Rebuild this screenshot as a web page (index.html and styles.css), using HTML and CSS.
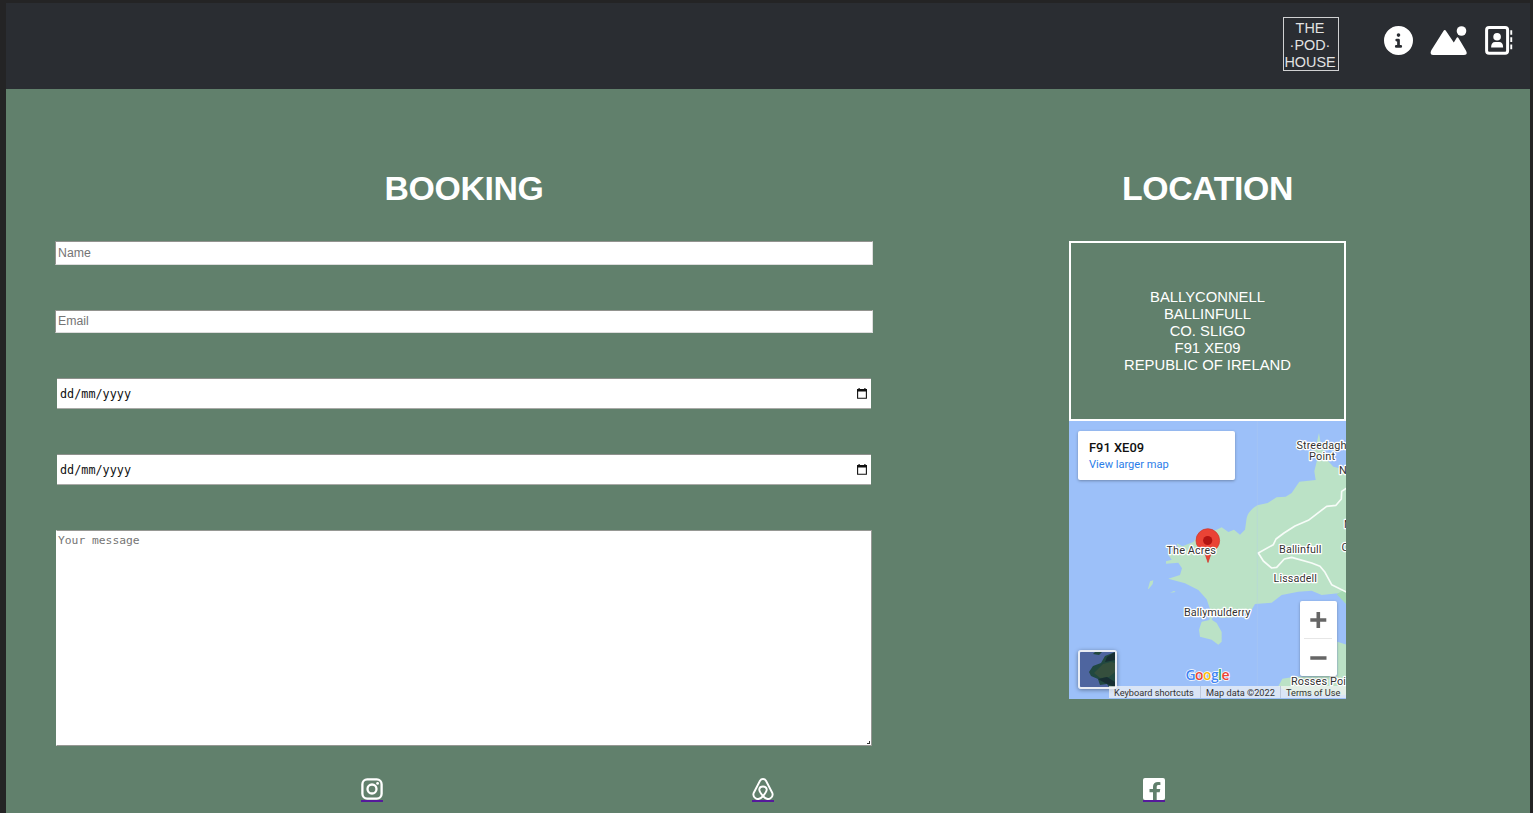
FILE: index.html
```html
<!DOCTYPE html>
<html lang="en">
<head>
<meta charset="utf-8">
<title>The Pod House - Booking</title>
<link rel="stylesheet" href="styles.css">
</head>
<body>
<div class="page">
  <header class="header">
    <a class="logo"><span>THE</span><span>·POD·</span><span>HOUSE</span></a>
    <nav class="nav">
      <svg class="nav-info" viewBox="0 0 512 512"><path fill="#fff" d="M256 0a256 256 0 1 0 0 512a256 256 0 1 0 0-512zm0 128a32 32 0 1 1 0 64a32 32 0 1 1 0-64zm40 256h-80a24 24 0 0 1 0-48h16v-64h-8a24 24 0 0 1 0-48h32a24 24 0 0 1 24 24v88h16a24 24 0 0 1 0 48z"/></svg>
      <svg class="nav-hills" viewBox="0 0 36 30"><circle cx="31" cy="5" r="4.8" fill="#fff"/><path fill="#fff" d="M12.8 5.2q1.4-2.3 2.9 0l7.6 11.2 2.6-4.2q1.1-1.7 2.2 0l7.3 12.400q2.400 4.300-1.800 4.400H2.500Q-1.200 28.700.8 24.300z"/></svg>
      <svg class="nav-contact" viewBox="0 0 28 29"><rect x="1.6" y="1.600" width="21" height="25.600" rx="2.500" fill="none" stroke="#fff" stroke-width="3"/><circle cx="12.100" cy="10.800" r="3.800" fill="#fff"/><path fill="#fff" d="M6.100 21.500q0-5.500 4-5.500h4q4 0 4 5.500z"/><path fill="#fff" d="M25.300 4.200h1.900v4.600h-1.900zM25.300 11.300h1.900v4.800h-1.900zM25.300 18.500h1.900v4.700h-1.900z"/></svg>
    </nav>
  </header>
  <main class="content">
    <section class="booking">
      <h1>BOOKING</h1>
      <form class="form">
        <input class="field name" type="text" placeholder="Name">
        <input class="field email" type="text" placeholder="Email">
        <label class="date"><span>dd/mm/yyyy</span><svg class="calendar" viewBox="0 0 10 11"><path d="M.6 2h8.800v8.300H.6z" fill="none" stroke="#111" stroke-width="1.100"/><path d="M0 1h10v2.600H0zM1.500 0h1.200v2H1.500zM7.300 0h1.200v2H7.300z" fill="#111"/></svg></label>
        <label class="date"><span>dd/mm/yyyy</span><svg class="calendar" viewBox="0 0 10 11"><path d="M.6 2h8.800v8.300H.6z" fill="none" stroke="#111" stroke-width="1.100"/><path d="M0 1h10v2.600H0zM1.500 0h1.200v2H1.500zM7.300 0h1.200v2H7.300z" fill="#111"/></svg></label>
        <div class="message-wrap">
          <textarea class="message" placeholder="Your message"></textarea>
          <svg class="grip" viewBox="0 0 3 3"><path d="M2 0h1v3H0V2h2z" fill="#333"/></svg>
        </div>
      </form>
    </section>
    <section class="location">
      <h1>LOCATION</h1>
      <address class="address">BALLYCONNELL<br>BALLINFULL<br>CO. SLIGO<br>F91 XE09<br>REPUBLIC OF IRELAND</address>
      <div class="map">
        <svg class="terrain" viewBox="0 0 277 278">
          <g transform="translate(-4 -3) scale(.33333)">
            <path fill="#bbe2c6" d="M762 45L766 70 790 130 805 146 850 157V540L820 526 770 531 740 518 700 521 650 531 620 554 570 558 560 575 520 596 470 600 446 592 440 605 455 615 470 642V671L460 680 440 665 405 656 402 635 410 611 433 606 436 576 425 544 400 516 360 496 310 482 345 471 351 451 340 434 303 437 303 430 320 425 310 410 340 390 335 376 352 385 385 372 400 350 455 335 470 328 490 342 507 335 525 350 540 335 545 300Q549 279 577 262L608 255 635 238 662 236 680 225 703 191 752 186 748 160 760 110 740 90 755 75z"/>
            <path fill="#bbe2c6" d="M249 512L255 490 265 487 263 498 251 513zM315 524L327 519 332 522zM817 671L850 682V830H680L640 805 652 782 690 776 817 774z"/>
            <path fill="#a5d9b3" d="M815 529L832 518 850 525V565z"/>
            <path fill="none" stroke="#f7fcf8" stroke-width="5" stroke-linejoin="round" d="M845 210L830 220 829 243 813 262 785 265 730 307 690 324 657 345 633 363 625 380 580 405 595 429 620 450 635 448 658 423 680 418 740 435 765 445 780 463 800 500 846 523"/>
            <path stroke="#b5cdec" stroke-opacity=".5" stroke-width="2" d="M577 9V843"/>
          </g>
          <path d="M139 141.500L135.500 131Q127 127 127 119.500a11.800 11.800 0 0 1 23.600 0q0 7.500-8.100 11.500z" fill="#ea4335" stroke="#cf3529" stroke-width=".7"/>
          <circle cx="138.700" cy="119.500" r="4.600" fill="#b31412"/>
          <g class="labels">
            <text x="227.500" y="28" textLength="50">Streedagh</text>
            <text x="240" y="39" textLength="26">Point</text>
            <text x="270" y="53">N</text>
            <text x="275" y="107">M</text>
            <text x="272.500" y="130">C</text>
            <text x="97.500" y="132.500" textLength="49.500">The Acres</text>
            <text x="210" y="132" textLength="42.500">Ballinfull</text>
            <text x="204.500" y="161" textLength="43.500">Lissadell</text>
            <text x="115" y="194.500" textLength="66.500">Ballymulderry</text>
            <text x="222" y="264" textLength="61">Rosses Poin</text>
          </g>
          <text class="google" x="116.500" y="258.500" textLength="44"><tspan fill="#4285f4">G</tspan><tspan fill="#ea4335">o</tspan><tspan fill="#fbbc04">o</tspan><tspan fill="#4285f4">g</tspan><tspan fill="#34a853">l</tspan><tspan fill="#ea4335">e</tspan></text>
        </svg>
        <div class="place"><strong>F91 XE09</strong><a>View larger map</a></div>
        <div class="zoom-control">
          <svg viewBox="0 0 37 75"><path d="M10.300 17.200h6.200V11h3.600v6.200h6.200v3.600h-6.200V27h-3.600v-6.200h-6.200zM10.300 55.200h16.200v3.600H10.300z" fill="#666"/><path d="M4 37.500h28" stroke="#e6e6e6"/></svg>
        </div>
        <div class="satellite">
          <svg viewBox="0 0 35 35"><path fill="#4e659f" d="M0 0h35v35H0z"/><path fill="#21483f" d="M35 0L25 4 21 11 13 14 9 20 11 24 18 27 20 33 27 32 29 35H35zM15 0L13 2 19 3 22 0z"/><path fill="#354f3d" d="M31 10L23 12 18 17 14 21 20 26 29 25 35 20V11z"/><path fill="#172e32" d="M35 0L27 5 25 10 35 8zM18 27L27 25 35 30V35L25 31z"/></svg>
        </div>
        <div class="credits"><span class="shortcuts">Keyboard shortcuts</span><span class="data">Map data ©2022</span><span class="terms">Terms of Use</span></div>
      </div>
    </section>
  </main>
  <footer class="social">
    <a><svg viewBox="0 0 22 22"><rect x="1.400" y="1.400" width="19.200" height="19.200" rx="4.800" fill="none" stroke="#fff" stroke-width="2.300"/><circle cx="11" cy="11" r="4.500" fill="none" stroke="#fff" stroke-width="2.300"/><circle cx="16.600" cy="5.400" r="1.400" fill="#fff"/></svg></a>
    <a><svg viewBox="0 0 22 22"><path fill="none" stroke="#fff" stroke-width="1.900" d="M11 18.200C8.500 15.200 7 13 7.300 11.200 7.600 9.200 9.200 8.500 11 8.500s3.400.7 3.700 2.700C15 13 13.500 15.200 11 18.200zM11 18.200C8.600 21 5.800 21.700 3.500 20.200 1.300 18.800 1 16.700 1.800 14.700L8 2.800C8.800 1.400 9.700 1 11 1s2.200.4 3 1.800l6.200 11.900c.8 2 .5 4.100-1.700 5.500-2.300 1.500-5.100.8-7.500-2z"/></svg></a>
    <a><svg viewBox="0 0 22 22"><path fill="#fff" fill-rule="evenodd" d="M2 0h18q2 0 2 2v18q0 2-2 2h-6.300v-7.800h3l.6-3.200h-3.600V9c0-1.600.7-2 2-2h1.700V4.200C16.600 4 15.700 4 15 4c-3.200 0-5 1.600-5 4.800V11H6.500v3.200H10V22H2q-2 0-2-2V2Q0 0 2 0z"/></svg></a>
  </footer>
</div>
</body>
</html>
```
FILE: styles.css
```css
* { box-sizing: border-box; }
body { margin: 0; background: #242425; overflow: hidden; font-family: "Liberation Sans", Arial, sans-serif; }
.page { height: 813px; padding: 3px 3px 0 6px; display: flex; flex-direction: column; }
.header { height: 86px; flex: none; background: #2a2d32; display: flex; justify-content: flex-end; align-items: flex-start; padding: 14px 17px 0 0; }
.logo { width: 56px; height: 54px; border: 1px solid #d0d1d2; margin-right: 45px; display: flex; flex-direction: column; align-items: center; color: #e2e3e3; font-size: 14.400px; line-height: 17px; padding: 2px 2px 0 0; }
.nav { display: flex; align-items: flex-start; padding-top: 9px; }
.nav svg { display: block; }
.nav-info { width: 29px; height: 29px; margin-right: 17px; }
.nav-hills { width: 37px; height: 30px; margin-right: 18px; }
.nav-contact { width: 28px; height: 29px; }
.content { height: 672px; flex: none; background: #61806c; display: flex; padding-left: 49px; }
h1 { margin: 0; padding-top: 78px; height: 152px; font-size: 33.800px; letter-spacing: -.35px; line-height: 42px; color: #fff; text-align: center; font-weight: bold; }
.booking { width: 818px; }
.form { display: flex; flex-direction: column; }
.field { display: block; width: 818px; border: 1px solid #92938f; border-right-color: #ddd; border-bottom-color: #ddd; border-radius: 0; padding: 0 2px; background: #fff; font: 12.300px "Liberation Sans", sans-serif; outline: 0; }
.field::placeholder, .message::placeholder { color: #757575; opacity: 1; }
.name { height: 24px; margin-bottom: 45px; }
.email { height: 23px; margin-bottom: 45px; padding-bottom: 2px; }
.date { width: 814px; height: 31px; margin: 0 0 45px 2px; padding: 1px 4px 0 3px; background: #fff; border-top: 1px solid #8d908c; border-bottom: 1px solid #a9aaa7; display: flex; align-items: center; justify-content: space-between; font: 11.800px "DejaVu Sans Mono", monospace; color: #111; }
.calendar { width: 10px; height: 11px; margin-top: -2px; }
.message-wrap { position: relative; width: 816px; height: 216px; margin-left: 1px; }
.message { display: block; width: 816px; height: 216px; resize: none; border: 1px solid #969894; border-left-color: #fff; border-radius: 0; padding: 3px 1px; font: 11.300px "DejaVu Sans Mono", monospace; outline: 0; }
.grip { position: absolute; right: 2px; bottom: 2px; width: 3px; height: 3px; }
.location { width: 277px; margin-left: 196px; }
.address { height: 180px; border: 2px solid #fff; padding-top: 46px; color: #fff; font-style: normal; font-size: 14.800px; line-height: 17px; text-align: center; }
.map { position: relative; width: 277px; height: 278px; overflow: hidden; background: #9cc0f9; font-family: Roboto, sans-serif; }
.terrain { display: block; width: 277px; height: 278px; }
.labels { font: 11px Roboto, sans-serif; fill: #333; stroke: #fff; stroke-width: 2.500px; stroke-linejoin: round; paint-order: stroke; }
.google { font: 600 14px "Open Sans", sans-serif; stroke: #fff; stroke-width: 1.500px; paint-order: stroke; }
.place { position: absolute; left: 9px; top: 10px; width: 157px; height: 49px; padding: 9px 11px; background: #fff; border-radius: 2px; box-shadow: 0 1px 3px rgba(0,0,0,.3); display: flex; flex-direction: column; }
.place strong { font-size: 12.900px; line-height: 16px; font-weight: 500; color: #111; }
.place a { font-size: 11.100px; line-height: 17px; color: #2b7de9; }
.zoom-control { position: absolute; left: 231px; top: 180px; width: 37px; height: 75px; background: #fff; border-radius: 2px; box-shadow: 0 1px 3px rgba(0,0,0,.3); }
.zoom-control svg, .satellite svg { display: block; width: 100%; height: 100%; }
.satellite { position: absolute; left: 9px; top: 229px; width: 39px; height: 39px; border: 2px solid #e9edf4; border-radius: 3px; overflow: hidden; box-shadow: 0 1px 4px rgba(0,0,0,.4); }
.credits { position: absolute; left: 40px; right: 0; bottom: 1px; height: 12px; display: flex; background: rgba(245,245,245,.7); color: #333; font-size: 9.200px; line-height: 13px; white-space: nowrap; }
.credits span { padding-left: 5px; border-right: 1px solid #bdc9dc; }
.shortcuts { width: 92px; }
.data { width: 80px; }
.credits .terms { width: 65px; border: 0; }
.social { flex: 1; background: #61806c; display: flex; padding: 17px 0 0 355px; gap: 369px; }
.social a { width: 22px; height: 24px; border-bottom: 2px solid #551a9b; }
.social svg { display: block; width: 22px; height: 22px; }
```
